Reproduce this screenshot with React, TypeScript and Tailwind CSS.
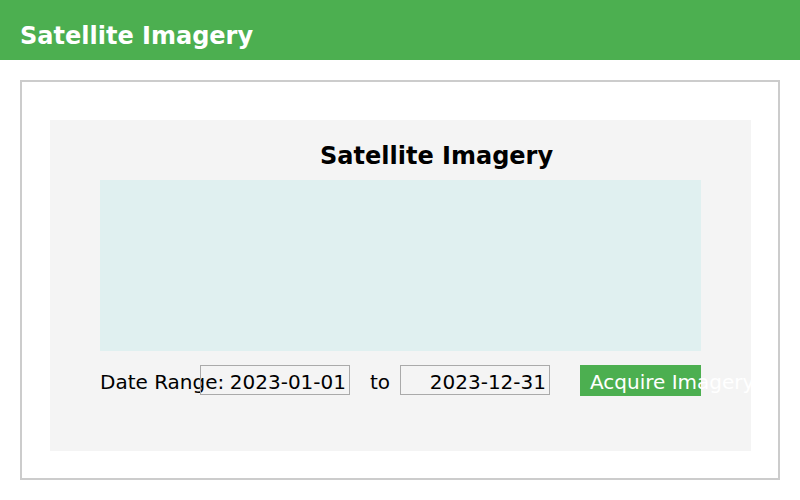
const App = () => {
  return (
    <div className="w-[800px] h-[500px] bg-white font-['DejaVu_Sans',sans-serif] text-black">
      <header className="h-[60px] bg-[#4caf50] px-5 pt-[22px]">
        <h1 className="text-[24px] leading-[28px] font-bold text-white">Satellite Imagery</h1>
      </header>
      <main className="px-5 pt-5">
        <div className="w-[760px] h-[400px] border-2 border-[#cccccc] pl-[28px] pt-[38px]">
          <section className="w-[701px] h-[331px] bg-[#f4f4f4] pt-[22px]">
            <h2 className="pl-[270px] text-[24px] leading-[28px] font-bold">Satellite Imagery</h2>
            <div className="ml-[50px] mt-[10px] w-[601px] h-[171px] bg-[#e0f0f0]"></div>
            <div className="ml-[50px] mt-[14px] flex items-start text-[20px]">
              <span className="w-[100px] h-[30px] leading-[35px] whitespace-nowrap">Date Range:</span>
              <div className="w-[150px] h-[30px] border border-[#aaaaaa] pr-[3px] text-right leading-[33px]">2023-01-01</div>
              <span className="ml-5 w-[20px] h-[30px] leading-[35px]">to</span>
              <div className="ml-[10px] w-[150px] h-[30px] border border-[#aaaaaa] pr-[3px] text-right leading-[33px]">2023-12-31</div>
              <button className="ml-[30px] w-[121px] h-[31px] bg-[#4caf50] pl-[10px] text-left text-white leading-[35px] whitespace-nowrap">
                Acquire Imagery
              </button>
            </div>
          </section>
        </div>
      </main>
    </div>
  )
}
export default App;
